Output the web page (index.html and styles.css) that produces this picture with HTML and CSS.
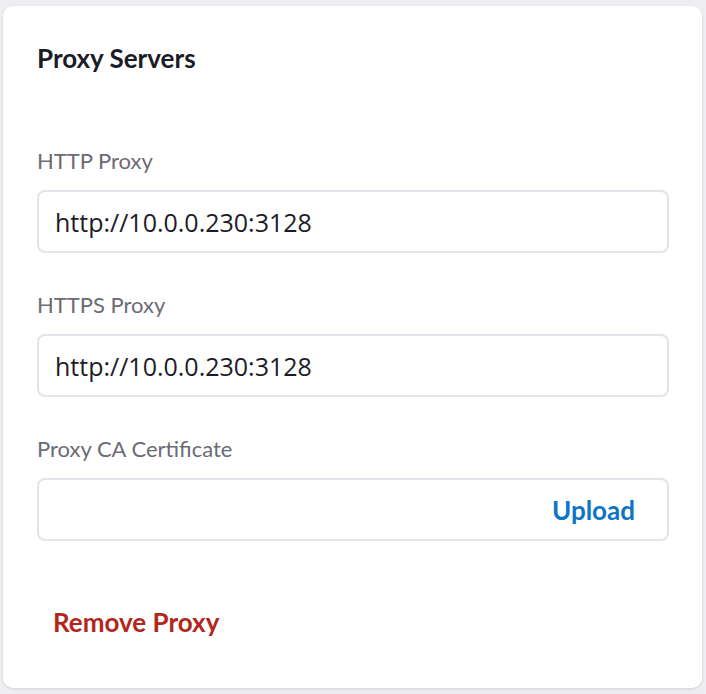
FILE: index.html
```html
<!DOCTYPE html>
<html>
<head>
<meta charset="utf-8">
<link rel="stylesheet" href="styles.css">
</head>
<body>
<div class="card">
  <h2 class="title">Proxy Servers</h2>
  <div class="field first">
    <label class="label">HTTP Proxy</label>
    <div class="input"><span class="value">http://10.0.0.230:3128</span></div>
  </div>
  <div class="field">
    <label class="label">HTTPS Proxy</label>
    <div class="input"><span class="value">http://10.0.0.230:3128</span></div>
  </div>
  <div class="field">
    <label class="label">Proxy CA Certificate</label>
    <div class="input upload-box"><span class="upload">Upload</span></div>
  </div>
  <div class="actions">
    <span class="remove">Remove Proxy</span>
  </div>
</div>
</body>
</html>
```

FILE: styles.css
```css
html, body {
  margin: 0;
  padding: 0;
  background: #ededf2;
}
body {
  padding: 6px 4px 6px 3px;
  font-family: Lato, "Open Sans", sans-serif;
}
.card {
  box-sizing: border-box;
  height: 682px;
  background: #ffffff;
  border-radius: 10px;
  box-shadow: 0 1px 3px rgba(0, 0, 0, 0.12);
  padding: 37px 33px 0 34px;
  display: flex;
  flex-direction: column;
}
.title {
  margin: 0;
  font-size: 26px;
  line-height: 30px;
  font-weight: 700;
  color: #1c1c28;
}
.field {
  display: flex;
  flex-direction: column;
  margin-top: 39px;
}
.field.first {
  margin-top: 75px;
}
.label {
  font-size: 22px;
  line-height: 26px;
  color: #6b6b74;
  margin-bottom: 16px;
}
.input {
  box-sizing: border-box;
  height: 63px;
  border: 2px solid #e3e3ea;
  border-radius: 8px;
  display: flex;
  align-items: center;
  padding: 0 16px;
}
.value {
  font-family: "Open Sans", sans-serif;
  font-size: 25px;
  color: #1c1c28;
}
.upload-box {
  justify-content: flex-end;
  padding-right: 32px;
}
.upload {
  font-size: 26px;
  font-weight: 700;
  color: #0e74c5;
}
.actions {
  margin-top: 50px;
}
.remove {
  display: inline-block;
  padding: 16px;
  font-size: 26px;
  line-height: 30px;
  font-weight: 700;
  color: #b3261e;
}
```
